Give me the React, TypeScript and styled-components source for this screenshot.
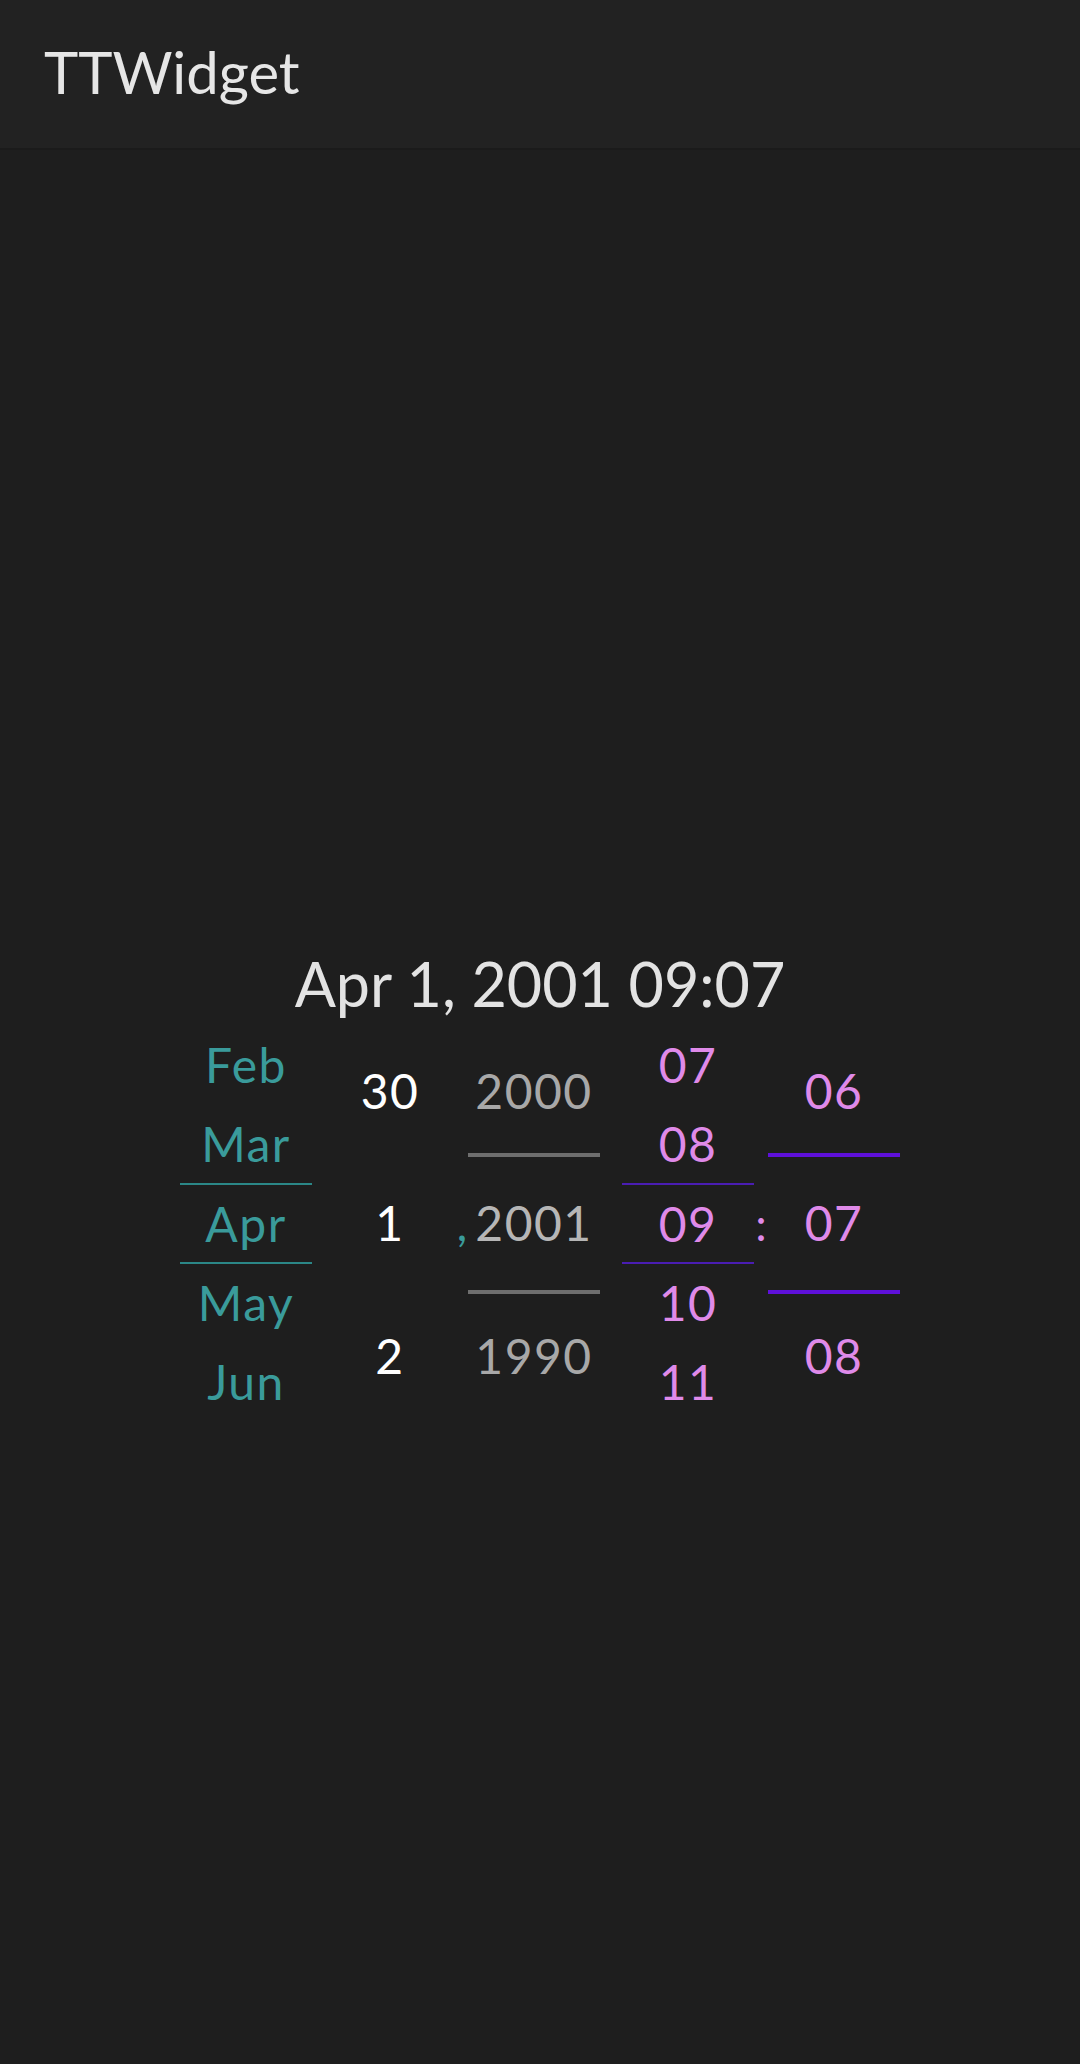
import React from "react";
import styled, { createGlobalStyle } from "styled-components";

const GlobalStyle = createGlobalStyle`
  html, body {
    margin: 0;
    padding: 0;
    background: #1e1e1e;
    font-family: Lato, "Open Sans", sans-serif;
  }
  #root {
    min-height: 2064px;
    background: #1e1e1e;
  }
`;

const AppBar = styled.header`
  height: 150px;
  box-sizing: border-box;
  background: #222222;
  border-bottom: 2px solid #1b1b1b;
  display: flex;
  align-items: center;
  padding: 0 0 5px 44px;
`;

const Title = styled.h1`
  margin: 0;
  font-size: 58px;
  font-weight: 400;
  color: #e6e6e6;
  line-height: 1.2;
`;

const Main = styled.main`
  display: flex;
  flex-direction: column;
  align-items: center;
  padding-top: 797px;
`;

const Display = styled.div`
  font-size: 61px;
  line-height: 74px;
  color: #e3e3e3;
  margin-bottom: 4px;
`;

const PickerRow = styled.div`
  display: flex;
  flex-direction: row;
  align-items: stretch;
  height: 397px;
`;

const Wheel = styled.div<{ $gapAfter?: number }>`
  width: 132px;
  display: flex;
  flex-direction: column;
  margin-right: ${(p) => p.$gapAfter ?? 0}px;
`;

const Item = styled.div<{
  $color: string;
  $selected?: boolean;
  $line?: string;
  $lineWidth?: number;
}>`
  flex: 1;
  position: relative;
  display: flex;
  align-items: center;
  justify-content: center;
  font-size: 48px;
  letter-spacing: 1.5px;
  line-height: 1;
  color: ${(p) => p.$color};

  ${(p) =>
    p.$selected && p.$line
      ? `
    &::before, &::after {
      content: "";
      position: absolute;
      left: 0;
      right: 0;
      height: ${p.$lineWidth}px;
      background: ${p.$line};
    }
    &::before { top: ${p.$lineWidth === 4 ? -4 : -1}px; }
    &::after { bottom: ${p.$lineWidth === 4 ? -4 : -1}px; }
  `
      : ""}
`;

const Separator = styled.div<{ $width: number; $color: string }>`
  width: ${(p) => p.$width}px;
  display: flex;
  align-items: center;
  justify-content: center;
  font-size: 46px;
  line-height: 1;
  color: ${(p) => p.$color};
`;

type WheelDef = {
  items: string[];
  selected: number;
  color: string;
  selectedColor?: string;
  line: string;
  lineWidth: number;
  gapAfter?: number;
};

const TEAL = "#3a9b9b";
const PINK = "#df8ae9";

const month: WheelDef = {
  items: ["Feb", "Mar", "Apr", "May", "Jun"],
  selected: 2,
  color: TEAL,
  line: "#2b8787",
  lineWidth: 2,
  gapAfter: 12,
};
const day: WheelDef = {
  items: ["30", "1", "2"],
  selected: 1,
  color: "#ffffff",
  line: "",
  lineWidth: 0,
};
const year: WheelDef = {
  items: ["2000", "2001", "1990"],
  selected: 1,
  color: "#a8a8a8",
  selectedColor: "#b6b6b6",
  line: "#6e6e6e",
  lineWidth: 4,
  gapAfter: 22,
};
const hour: WheelDef = {
  items: ["07", "08", "09", "10", "11"],
  selected: 2,
  color: PINK,
  line: "#4a1db3",
  lineWidth: 2,
};
const minute: WheelDef = {
  items: ["06", "07", "08"],
  selected: 1,
  color: PINK,
  line: "#5e10da",
  lineWidth: 4,
};

function WheelColumn({ def }: { def: WheelDef }) {
  return (
    <Wheel $gapAfter={def.gapAfter}>
      {def.items.map((text, i) => {
        const sel = i === def.selected;
        return (
          <Item
            key={text + i}
            $color={sel && def.selectedColor ? def.selectedColor : def.color}
            $selected={sel}
            $line={def.line}
            $lineWidth={def.lineWidth}
          >
            {text}
          </Item>
        );
      })}
    </Wheel>
  );
}

export default function App() {
  return (
    <>
      <GlobalStyle />
      <AppBar>
        <Title>TTWidget</Title>
      </AppBar>
      <Main>
        <Display>Apr 1, 2001 09:07</Display>
        <PickerRow>
          <WheelColumn def={month} />
          <WheelColumn def={day} />
          <Separator $width={12} $color={TEAL}>
            ,
          </Separator>
          <WheelColumn def={year} />
          <WheelColumn def={hour} />
          <Separator $width={14} $color={PINK}>
            :
          </Separator>
          <WheelColumn def={minute} />
        </PickerRow>
      </Main>
    </>
  );
}
